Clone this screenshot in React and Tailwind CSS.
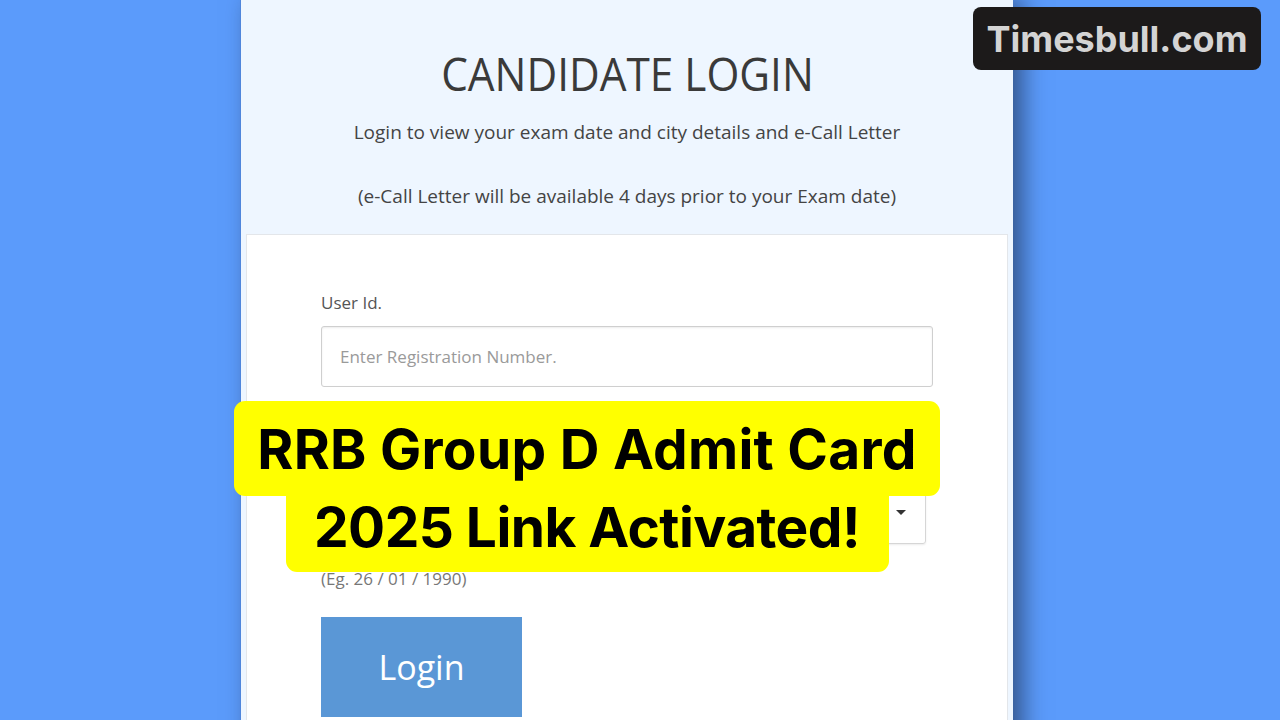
import React from 'react';

export default function App() {
  return (
    <div className="relative w-[1280px] h-[720px] overflow-hidden bg-[#5b9bfb] flex" style={{ fontFamily: '"Open Sans", sans-serif' }}>
      <div className="ml-[240px] w-[773px] h-[760px] bg-[#eef6ff] border-l border-[#4f86dc] shadow-[10px_0_22px_rgba(20,30,50,0.55)] flex flex-col">
        <div className="h-[234px] flex flex-col items-center">
          <h1 className="mt-[46px] text-[46px] leading-[54px] text-[#3a3a3a] scale-x-[0.92]">CANDIDATE LOGIN</h1>
          <p className="mt-[19px] text-[19px] leading-[26px] text-[#444]">Login to view your exam date and city details and e-Call Letter</p>
          <p className="mt-[38px] text-[19px] leading-[26px] text-[#444]">(e-Call Letter will be available 4 days prior to your Exam date)</p>
        </div>
        <div className="mx-[5px] flex-1 bg-white border-t border-x border-[#e3e6ea] px-[74px] pt-[56px]">
          <label className="block text-[17px] leading-[24px] text-[#555]">User Id.</label>
          <div className="mt-[11px] h-[61px] border border-[#cfcfcf] rounded-[3px] shadow-[inset_0_1px_2px_rgba(0,0,0,0.08)] flex items-center px-[18px] text-[17px] text-[#9a9a9a]">
            Enter Registration Number.
          </div>
          <label className="block mt-[59px] text-[17px] leading-[24px] text-[#555]">Date of Birth</label>
          <div className="mt-[11px] w-[605px] h-[63px] border border-[#d6d6d6] rounded-[3px] shadow-[0_1px_2px_rgba(0,0,0,0.08)] flex items-center justify-end pr-[19px]">
            <span className="w-0 h-0 border-l-[5px] border-r-[5px] border-t-[5px] border-l-transparent border-r-transparent border-t-[#333]" />
          </div>
          <p className="mt-[23px] text-[17px] leading-[24px] text-[#777]">(Eg. 26 / 01 / 1990)</p>
          <div className="mt-[26px] w-[201px] h-[100px] bg-[#5a97d6] flex items-center justify-center text-white text-[34px]">Login</div>
        </div>
      </div>

      <div className="absolute left-[973px] top-[7px] w-[288px] h-[63px] rounded-[8px] bg-[#1c1a1a] flex items-center justify-center text-[#d4d4d4] text-[36px] font-bold" style={{ fontFamily: 'Inter, sans-serif' }}>
        Timesbull.com
      </div>

      <div className="absolute left-[234px] top-[401px] w-[706px] flex flex-col items-center text-black font-bold text-[55px]" style={{ fontFamily: 'Inter, sans-serif' }}>
        <div className="w-full h-[95px] bg-[#ffff00] rounded-[11px] flex items-center justify-center leading-[76px] tracking-[0.005em]">RRB Group D Admit Card</div>
        <div className="w-[603px] h-[77px] -mt-px bg-[#ffff00] rounded-b-[11px] flex items-start justify-center leading-[64px] tracking-[-0.01em]">2025 Link Activated!</div>
      </div>
    </div>
  );
}
